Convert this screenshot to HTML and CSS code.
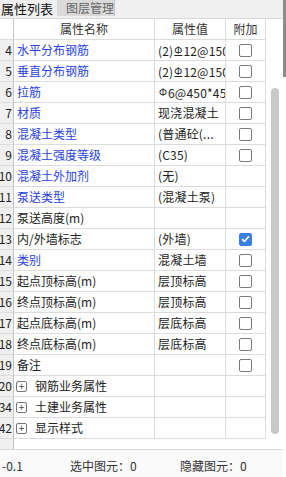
FILE: index.html
```html
<!DOCTYPE html>
<html lang="zh">
<head>
    <meta charset="UTF-8">
    <title>属性列表</title>
    <link rel="stylesheet" href="styles.css">
</head>
<body>
    <div class="main">
        <div class="tabs">
            <div class="tab tab-active">属性列表</div>
            <div class="tab tab-off">图层管理</div>
        </div>

        <div class="grid">
            <div class="table">
                <div class="row head">
                    <div class="cell num"></div>
                    <div class="cell c">属性名称</div>
                    <div class="cell c">属性值</div>
                    <div class="cell c">附加</div>
                </div>

                <div class="row">
                    <div class="cell num">4</div>
                    <div class="cell name blue">水平分布钢筋</div>
                    <div class="cell val">(2)<span class="bar bar3">Φ</span>12@150</div>
                    <div class="cell add"><span class="box"></span></div>
                </div>
                <div class="row">
                    <div class="cell num">5</div>
                    <div class="cell name blue">垂直分布钢筋</div>
                    <div class="cell val">(2)<span class="bar bar3">Φ</span>12@150</div>
                    <div class="cell add"><span class="box"></span></div>
                </div>
                <div class="row">
                    <div class="cell num">6</div>
                    <div class="cell name blue">拉筋</div>
                    <div class="cell val"><span class="bar">Φ</span>6@450*450</div>
                    <div class="cell add"><span class="box"></span></div>
                </div>
                <div class="row">
                    <div class="cell num">7</div>
                    <div class="cell name blue">材质</div>
                    <div class="cell val">现浇混凝土</div>
                    <div class="cell add"><span class="box"></span></div>
                </div>
                <div class="row">
                    <div class="cell num">8</div>
                    <div class="cell name blue">混凝土类型</div>
                    <div class="cell val">(普通砼(...</div>
                    <div class="cell add"><span class="box"></span></div>
                </div>
                <div class="row">
                    <div class="cell num">9</div>
                    <div class="cell name blue">混凝土强度等级</div>
                    <div class="cell val">(C35)</div>
                    <div class="cell add"><span class="box"></span></div>
                </div>
                <div class="row">
                    <div class="cell num">10</div>
                    <div class="cell name blue">混凝土外加剂</div>
                    <div class="cell val">(无)</div>
                    <div class="cell add"></div>
                </div>
                <div class="row">
                    <div class="cell num">11</div>
                    <div class="cell name blue">泵送类型</div>
                    <div class="cell val">(混凝土泵)</div>
                    <div class="cell add"></div>
                </div>
                <div class="row">
                    <div class="cell num">12</div>
                    <div class="cell name">泵送高度(m)</div>
                    <div class="cell val"></div>
                    <div class="cell add"></div>
                </div>
                <div class="row">
                    <div class="cell num">13</div>
                    <div class="cell name">内/外墙标志</div>
                    <div class="cell val">(外墙)</div>
                    <div class="cell add">
                        <span class="box checked">
                            <svg width="9" height="8" viewBox="0 0 9 8"><polyline points="1,4.2 3.4,6.4 8,1.4" fill="none" stroke="#fff" stroke-width="1.6"/></svg>
                        </span>
                    </div>
                </div>
                <div class="row">
                    <div class="cell num">14</div>
                    <div class="cell name blue">类别</div>
                    <div class="cell val">混凝土墙</div>
                    <div class="cell add"><span class="box"></span></div>
                </div>
                <div class="row">
                    <div class="cell num">15</div>
                    <div class="cell name">起点顶标高(m)</div>
                    <div class="cell val">层顶标高</div>
                    <div class="cell add"><span class="box"></span></div>
                </div>
                <div class="row">
                    <div class="cell num">16</div>
                    <div class="cell name">终点顶标高(m)</div>
                    <div class="cell val">层顶标高</div>
                    <div class="cell add"><span class="box"></span></div>
                </div>
                <div class="row">
                    <div class="cell num">17</div>
                    <div class="cell name">起点底标高(m)</div>
                    <div class="cell val">层底标高</div>
                    <div class="cell add"><span class="box"></span></div>
                </div>
                <div class="row">
                    <div class="cell num">18</div>
                    <div class="cell name">终点底标高(m)</div>
                    <div class="cell val">层底标高</div>
                    <div class="cell add"><span class="box"></span></div>
                </div>
                <div class="row">
                    <div class="cell num">19</div>
                    <div class="cell name">备注</div>
                    <div class="cell val"></div>
                    <div class="cell add"><span class="box"></span></div>
                </div>

                <!-- 分组 -->
                <div class="row">
                    <div class="cell num">20</div>
                    <div class="cell name group"><span class="plus">+</span>钢筋业务属性</div>
                    <div class="cell val"></div>
                    <div class="cell add"></div>
                </div>
                <div class="row">
                    <div class="cell num">34</div>
                    <div class="cell name group"><span class="plus">+</span>土建业务属性</div>
                    <div class="cell val"></div>
                    <div class="cell add"></div>
                </div>
                <div class="row">
                    <div class="cell num">42</div>
                    <div class="cell name group"><span class="plus">+</span>显示样式</div>
                    <div class="cell val"></div>
                    <div class="cell add"></div>
                </div>

                <div class="filler"><div class="filler-num"></div></div>
            </div>

            <div class="scroll">
                <div class="thumb"></div>
            </div>
        </div>

        <div class="status">
            <span class="st st-1">-0.1</span>
            <span class="st st-2">选中图元：0</span>
            <span class="st">隐藏图元：0</span>
        </div>
    </div>
    <div class="edge">
        <div class="edge-grip"></div>
    </div>
</body>
</html>
```

FILE: styles.css
```css
/* Панель свойств */
body {
    margin: 0;
    width: 286px;
    height: 477px;
    overflow: hidden;
    display: flex;
    background-color: #fff;
    color: #222;
    font-family: "Noto Sans CJK SC", "Noto Sans", sans-serif;
    font-size: 12px;
}

.main {
    width: 283px;
    display: flex;
    flex-direction: column;
}

.edge {
    width: 3px;
}

.edge-grip {
    height: 77px;
    background-color: #8c8c8c;
}

/* Вкладки */
.tabs {
    height: 18px;
    background-color: #f0f0f0;
    display: flex;
    align-items: flex-start;
}

.tab {
    height: 17px;
    line-height: 17px;
    white-space: nowrap;
}

.tab-active {
    width: 56px;
    padding-left: 1px;
    font-size: 13px;
    color: #111;
}

.tab-off {
    height: 16px;
    line-height: 16px;
    width: 48px;
    padding-left: 9px;
    background-color: #dadada;
    color: #666;
    border-right: 1px solid #c4c4c4;
}

/* Таблица */
.grid {
    display: flex;
    border-top: 1px solid #d8d8d8;
    border-bottom: 1px solid #d8d8d8;
    height: 430px;
}

.table {
    width: 266px;
    display: flex;
    flex-direction: column;
}

.row {
    display: grid;
    grid-template-columns: 14px 141px 71px 40px;
    height: 21px;
}

.cell {
    box-sizing: border-box;
    border-right: 1px solid #dcdcdc;
    border-bottom: 1px solid #dcdcdc;
    line-height: 20px;
    white-space: nowrap;
    overflow: hidden;
}

.cell.c {
    text-align: center;
    color: #333;
}

.cell.num {
    background-color: #f0f0f0;
    border-right-color: #c4c4c4;
    text-align: right;
    padding-right: 1px;
    direction: rtl;
}

.row.head .cell.num {
    background-color: #fff;
}

.cell.name {
    padding-left: 3px;
}

.cell.val {
    padding-left: 3px;
    letter-spacing: 0.2px;
}

.blue {
    color: #2a42e4;
}

.bar {
    display: inline-block;
    width: 10px;
    text-align: center;
    font-size: 10px;
    vertical-align: 2px;
    letter-spacing: 0;
}

.bar3 {
    text-decoration: underline;
}

.cell.add {
    display: flex;
    align-items: center;
    justify-content: center;
}

.box {
    box-sizing: border-box;
    width: 13px;
    height: 13px;
    border: 1px solid #7a7a7a;
    border-radius: 2px;
    background-color: #fff;
    display: flex;
    align-items: center;
    justify-content: center;
}

.box.checked {
    background-color: #3a7fe4;
    border-color: #3a7fe4;
}

.group {
    display: flex;
    align-items: center;
}

.plus {
    box-sizing: border-box;
    width: 11px;
    height: 11px;
    border: 1px solid #777;
    border-radius: 2px;
    margin-left: -1px;
    margin-right: 8px;
    font-size: 10px;
    line-height: 8px;
    text-align: center;
    color: #444;
}

.filler {
    flex-grow: 1;
    display: flex;
}

.filler-num {
    width: 13px;
    background-color: #f0f0f0;
    border-right: 1px solid #c4c4c4;
}

/* Прокрутка */
.scroll {
    width: 17px;
    padding-top: 69px;
}

.thumb {
    width: 8px;
    height: 346px;
    margin-left: 5px;
    border-radius: 4px;
    background-color: #c8c8c8;
}

/* Строка состояния */
.status {
    flex-grow: 1;
    display: flex;
    align-items: center;
    padding-top: 4px;
    background-color: #fafafa;
    color: #333;
    white-space: nowrap;
}

.st-1 {
    width: 68px;
    padding-left: 2px;
}

.st-2 {
    width: 110px;
}
```
